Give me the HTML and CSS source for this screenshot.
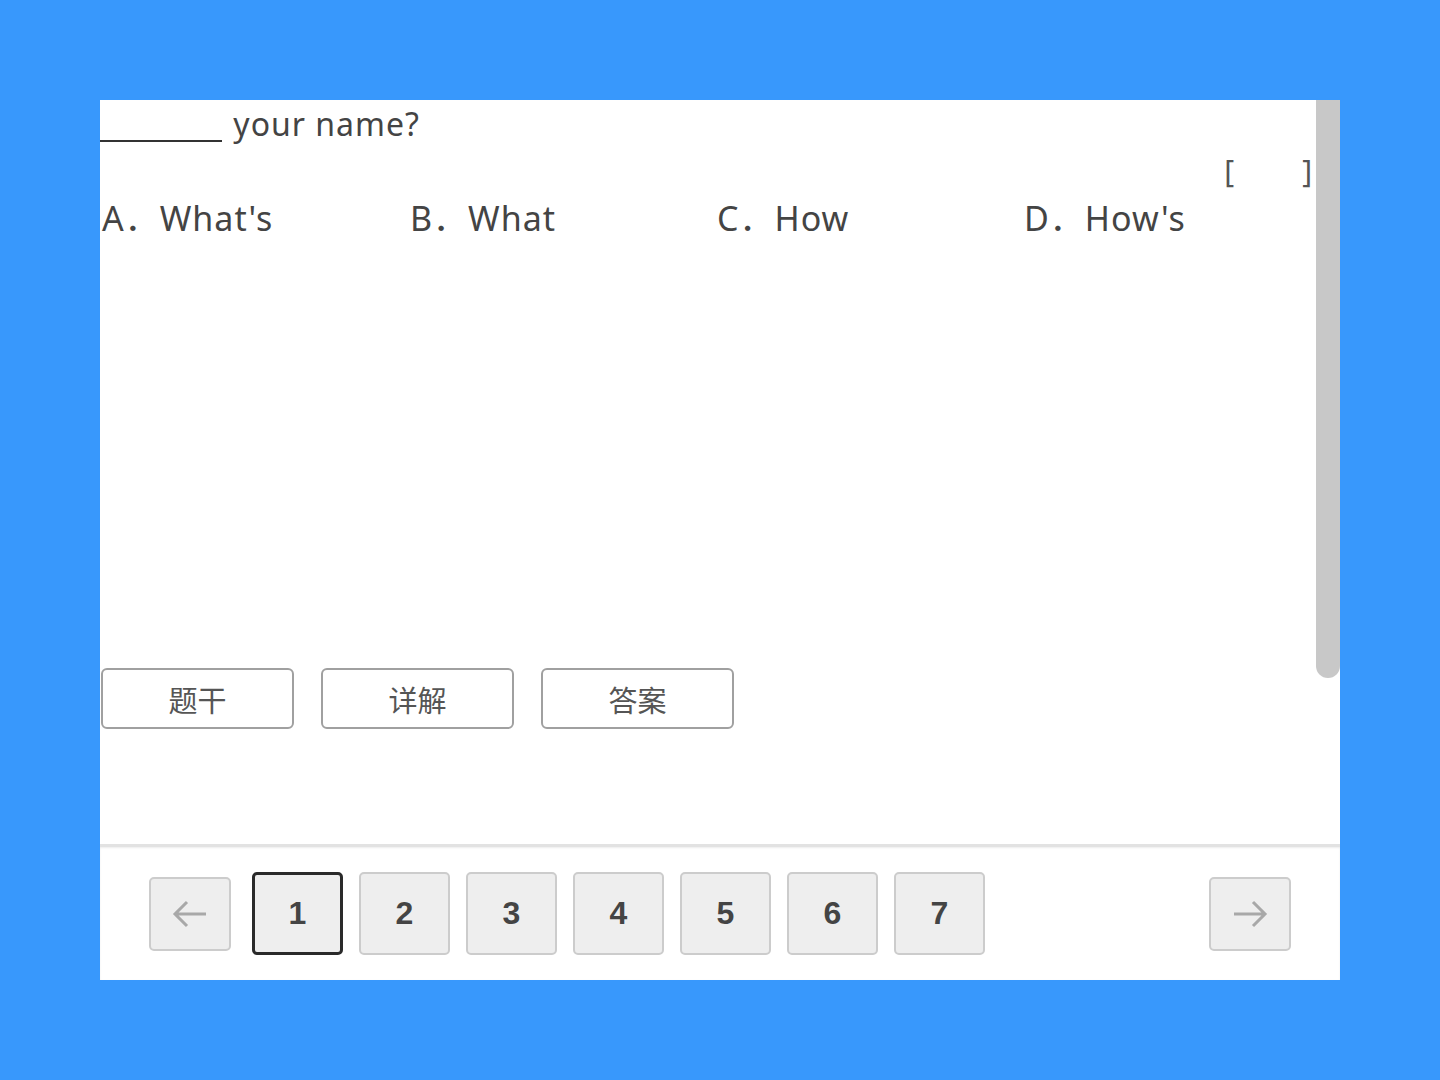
FILE: index.html
```html
<!DOCTYPE html>
<html lang="zh-CN">
<head>
    <meta charset="UTF-8">
    <title>练习</title>
    <link rel="stylesheet" href="styles.css">
</head>
<body>
    <div class="panel">
        <div class="question-area">
            <div class="question-body">
                <p class="stem"><span class="blank"></span> your name?</p>
                <div class="bracket"><span>[</span><span>]</span></div>
                <div class="options">
                    <span>A．What's</span>
                    <span>B．What</span>
                    <span>C．How</span>
                    <span>D．How's</span>
                </div>
                <div class="actions">
                    <button class="tab-btn">题干</button>
                    <button class="tab-btn">详解</button>
                    <button class="tab-btn">答案</button>
                </div>
            </div>
            <!-- scrollbar track -->
            <div class="scroll-track"><div class="scroll-thumb"></div></div>
        </div>

        <!-- pager -->
        <div class="pager">
            <button class="nav-btn">
                <svg width="40" height="30" viewBox="0 0 40 30"><path d="M36 15H5M17 3L5 15l12 12" fill="none" stroke="#a8a8a8" stroke-width="3"/></svg>
            </button>
            <div class="pages">
                <button class="page current">1</button>
                <button class="page">2</button>
                <button class="page">3</button>
                <button class="page">4</button>
                <button class="page">5</button>
                <button class="page">6</button>
                <button class="page">7</button>
            </div>
            <button class="nav-btn">
                <svg width="40" height="30" viewBox="0 0 40 30"><path d="M4 15h31M23 3l12 12-12 12" fill="none" stroke="#a8a8a8" stroke-width="3"/></svg>
            </button>
        </div>
    </div>
</body>
</html>
```

FILE: styles.css
```css
* {
    margin: 0;
    padding: 0;
    box-sizing: border-box;
}

body {
    background-color: #3898fc;
    font-family: "Noto Sans", "Noto Sans CJK SC", sans-serif;
    color: #3a3a3a;
    height: 1080px;
    padding: 100px;
}

.panel {
    width: 1240px;
    height: 880px;
    background-color: #ffffff;
    display: flex;
    flex-direction: column;
}

/* Question */
.question-area {
    height: 744px;
    display: flex;
    overflow: hidden;
}

.question-body {
    flex: 1;
    min-width: 0;
}

.scroll-track {
    width: 24px;
    background-color: #ffffff;
}

.scroll-thumb {
    height: 578px;
    background-color: #c8c8c8;
    border-radius: 0 0 12px 12px;
}

.stem {
    font-size: 32px;
    line-height: 48px;
    letter-spacing: 1px;
    color: #444;
}

.blank {
    display: inline-block;
    width: 122px;
    border-bottom: 2px solid #333;
    vertical-align: -6px;
    margin-right: 2px;
}

.bracket {
    display: flex;
    justify-content: flex-end;
    gap: 68px;
    padding-right: 4px;
    font-size: 30px;
    line-height: 46px;
    color: #555;
}

.options {
    display: grid;
    grid-template-columns: 308px 307px 307px 1fr;
    font-size: 34px;
    line-height: 48px;
    color: #444;
    letter-spacing: 1px;
    padding-left: 2px;
}

.actions {
    display: flex;
    gap: 27px;
    margin-top: 426px;
    padding-left: 1px;
}

.tab-btn {
    width: 193px;
    height: 61px;
    background-color: #ffffff;
    border: 2px solid #a0a0a0;
    border-radius: 6px;
    font-family: "Noto Sans CJK SC", sans-serif;
    font-size: 29px;
    color: #555;
}

/* Pager */
.pager {
    flex: 1;
    border-top: 3px solid #e2e2e2;
    box-shadow: inset 0 1px 2px #ececec;
    display: flex;
    align-items: center;
    padding: 0 49px;
}

.pages {
    display: flex;
    gap: 16px;
    margin-left: 21px;
    margin-right: auto;
}

.nav-btn {
    width: 82px;
    height: 74px;
    background-color: #eeeeee;
    border: 2px solid #cccccc;
    border-radius: 5px;
    display: flex;
    align-items: center;
    justify-content: center;
}

.page {
    width: 91px;
    height: 83px;
    background-color: #eeeeee;
    border: 2px solid #cccccc;
    border-radius: 5px;
    font-family: "Liberation Sans", sans-serif;
    font-size: 32px;
    font-weight: bold;
    color: #444;
}

.page.current {
    border: 3px solid #2a2a2a;
}
```
